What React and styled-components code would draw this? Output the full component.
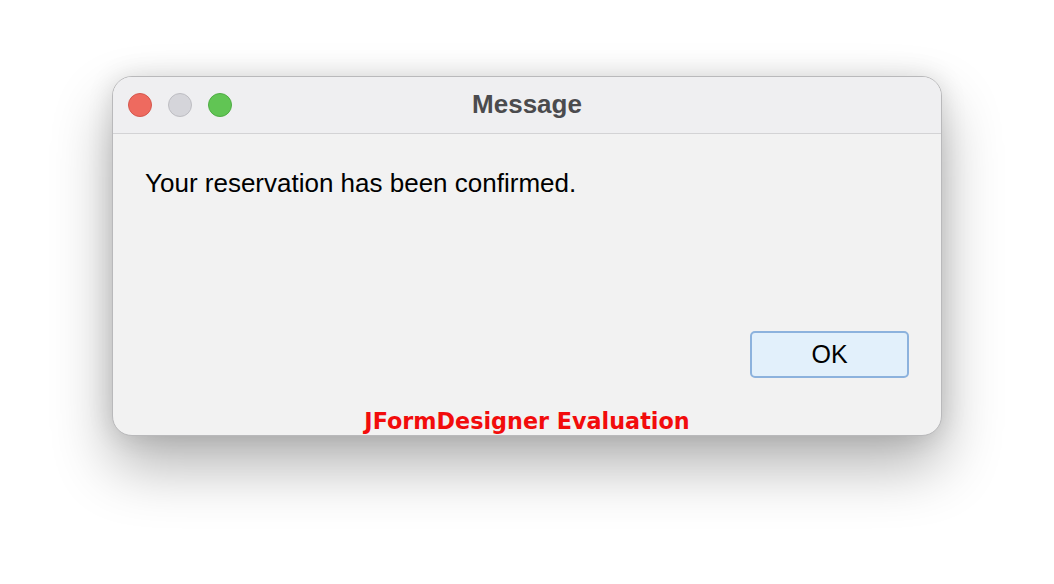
import React from "react";
import styled, { createGlobalStyle } from "styled-components";

const Global = createGlobalStyle`
  html, body { margin: 0; padding: 0; background: #ffffff; }
  body { width: 1054px; height: 584px; overflow: hidden; font-family: "Liberation Sans", Arial, sans-serif; }
`;

const Stage = styled.div`
  width: 1054px;
  height: 584px;
  padding: 76px 0 0 112px;
  box-sizing: border-box;
`;

const Window = styled.div`
  width: 830px;
  height: 360px;
  box-sizing: border-box;
  border-radius: 20px;
  background: #f2f2f2;
  border: 1px solid #b9b9bb;
  box-shadow: 0 30px 60px rgba(0, 0, 0, 0.3), 0 0 26px rgba(0, 0, 0, 0.12);
  display: flex;
  flex-direction: column;
  overflow: hidden;
`;

const TitleBar = styled.div`
  height: 56px;
  flex: none;
  background: #efeff1;
  border-bottom: 1px solid #d3d3d5;
  display: flex;
  align-items: center;
  position: relative;
  padding-left: 15px;
  gap: 16px;
`;

const Light = styled.span`
  width: 24px;
  height: 24px;
  border-radius: 50%;
  box-sizing: border-box;
  background: ${(p) => p.$color};
  border: 1px solid ${(p) => p.$edge};
`;

const Title = styled.div`
  position: absolute;
  left: 0;
  right: 0;
  top: 0;
  bottom: 2px;
  display: flex;
  align-items: center;
  justify-content: center;
  font-weight: bold;
  font-size: 26px;
  color: #4b4b4e;
  pointer-events: none;
`;

const Body = styled.div`
  flex: 1;
  display: flex;
  flex-direction: column;
  padding: 34px 32px 0 32px;
`;

const Message = styled.div`
  font-size: 26px;
  color: #000;
`;

const ButtonRow = styled.div`
  display: flex;
  justify-content: flex-end;
  margin-top: 132px;
`;

const OkButton = styled.button`
  width: 159px;
  height: 47px;
  box-sizing: border-box;
  background: #e2f0fb;
  border: 2px solid #8cb2dd;
  border-radius: 5px;
  font-family: "Liberation Sans", Arial, sans-serif;
  font-size: 25px;
  color: #000;
  padding: 0;
`;

const Footer = styled.div`
  margin-top: auto;
  padding-bottom: 1px;
  text-align: center;
  font-family: "DejaVu Sans", sans-serif;
  font-weight: bold;
  font-size: 22.3px;
  color: #f20c0c;
`;

export default function App() {
  return (
    <>
      <Global />
      <Stage>
        <Window>
          <TitleBar>
            <Light $color="#ee6a5f" $edge="#d4574d" />
            <Light $color="#d5d5da" $edge="#bdbdc2" />
            <Light $color="#61c554" $edge="#4fac44" />
            <Title>Message</Title>
          </TitleBar>
          <Body>
            <Message>Your reservation has been confirmed.</Message>
            <ButtonRow>
              <OkButton>OK</OkButton>
            </ButtonRow>
            <Footer>JFormDesigner Evaluation</Footer>
          </Body>
        </Window>
      </Stage>
    </>
  );
}
